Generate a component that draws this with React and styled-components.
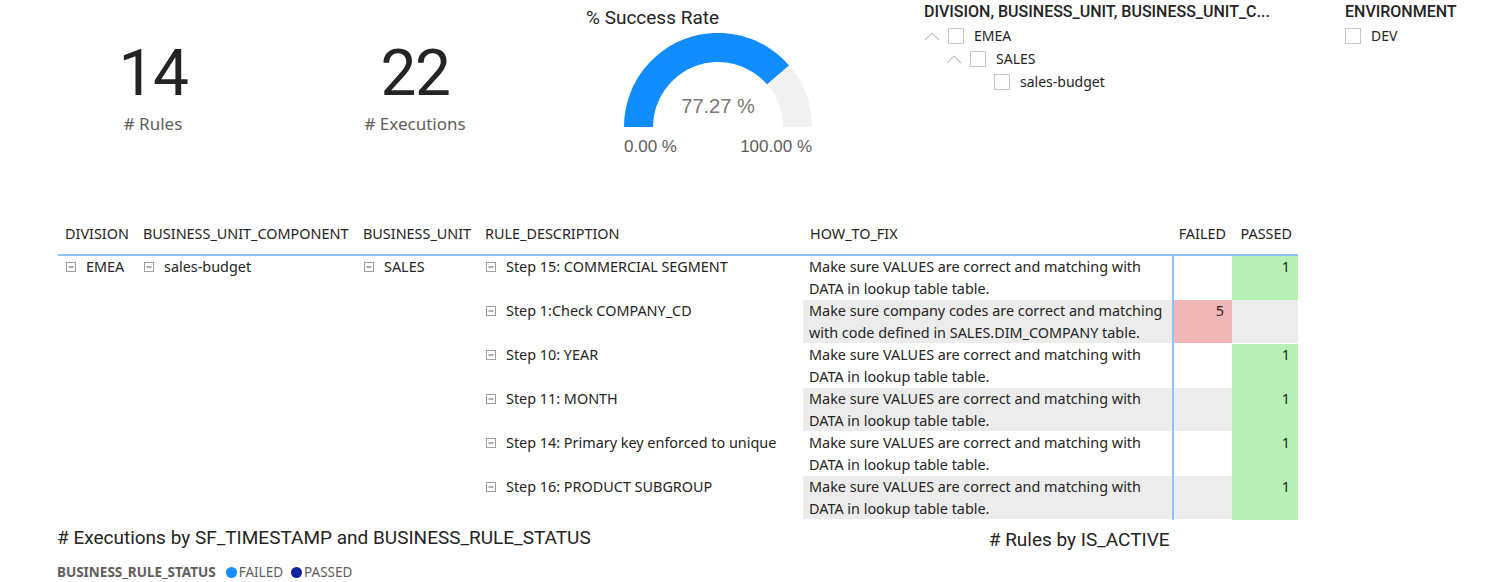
import React from 'react';
import styled, { createGlobalStyle } from 'styled-components';

const GlobalStyle = createGlobalStyle`
  body {
    margin: 0;
    background: #ffffff;
    font-family: "Noto Sans", "Open Sans", sans-serif;
    color: #252423;
  }
`;

const DIN = `"Roboto", "Liberation Sans", sans-serif`;

const rows = [
    { rule: 'Step 15: COMMERCIAL SEGMENT', fix: ['Make sure VALUES are correct and matching with', 'DATA in lookup table table.'], passed: 1 },
    { rule: 'Step 1:Check COMPANY_CD', fix: ['Make sure company codes are correct and matching', 'with code defined in SALES.DIM_COMPANY table.'], failed: 5 },
    { rule: 'Step 10: YEAR', fix: ['Make sure VALUES are correct and matching with', 'DATA in lookup table table.'], passed: 1 },
    { rule: 'Step 11: MONTH', fix: ['Make sure VALUES are correct and matching with', 'DATA in lookup table table.'], passed: 1 },
    { rule: 'Step 14: Primary key enforced to unique', fix: ['Make sure VALUES are correct and matching with', 'DATA in lookup table table.'], passed: 1 },
    { rule: 'Step 16: PRODUCT SUBGROUP', fix: ['Make sure VALUES are correct and matching with', 'DATA in lookup table table.'], passed: 1 },
];

const Chevron = () => (
    <svg width="16" height="10" viewBox="0 0 16 10">
        <polyline points="1,9 8,2 15,9" fill="none" stroke="#c8c6c4" strokeWidth="1.2" />
    </svg>
);

const Expander = () => (
    <svg width="10" height="10" viewBox="0 0 10 10">
        <rect x="0.5" y="0.5" width="9" height="9" fill="#fff" stroke="#a19f9d" />
        <line x1="2.5" y1="5" x2="7.5" y2="5" stroke="#605e5c" />
    </svg>
);

const App = () => {
    return (
        <App.Wrapper>
            <GlobalStyle />
            <TopRow>
                <Card $left={58}>
                    <BigNumber>14</BigNumber>
                    <CardLabel># Rules</CardLabel>
                </Card>
                <Card $left={72}>
                    <BigNumber>22</BigNumber>
                    <CardLabel># Executions</CardLabel>
                </Card>
                <Gauge>
                    <VisualTitle>% Success Rate</VisualTitle>
                    <GaugeBody>
                        <svg width="188" height="95" viewBox="0 0 188 95">
                            <path d="M 0 94 A 94 94 0 0 1 165.1 32.4 L 143.1 51.4 A 65 65 0 0 0 29 94 Z" fill="#118dff" />
                            <path d="M 165.1 32.4 A 94 94 0 0 1 188 94 L 159 94 A 65 65 0 0 0 143.1 51.4 Z" fill="#f1f1f1" />
                        </svg>
                        <GaugeValue>77.27 %</GaugeValue>
                        <GaugeScale>
                            <span>0.00 %</span>
                            <span>100.00 %</span>
                        </GaugeScale>
                    </GaugeBody>
                </Gauge>
                <Slicer $left={98} $width={380}>
                    <SlicerTitle>DIVISION, BUSINESS_UNIT, BUSINESS_UNIT_C...</SlicerTitle>
                    <SlicerItem $indent={0}><Chevron /><Box /><span>EMEA</span></SlicerItem>
                    <SlicerItem $indent={22}><Chevron /><Box /><span>SALES</span></SlicerItem>
                    <SlicerItem $indent={70} $leaf><Box /><span>sales-budget</span></SlicerItem>
                </Slicer>
                <Slicer $left={41} $width={130}>
                    <SlicerTitle>ENVIRONMENT</SlicerTitle>
                    <SlicerItem $indent={0} $leaf><Box /><span>DEV</span></SlicerItem>
                </Slicer>
            </TopRow>

            <Table>
                <HeadCell>DIVISION</HeadCell>
                <HeadCell>BUSINESS_UNIT_COMPONENT</HeadCell>
                <HeadCell>BUSINESS_UNIT</HeadCell>
                <HeadCell>RULE_DESCRIPTION</HeadCell>
                <HeadCell>HOW_TO_FIX</HeadCell>
                <HeadCell $right $line>FAILED</HeadCell>
                <HeadCell $right>PASSED</HeadCell>
                {rows.map((r, i) => {
                    const shade = i % 2 === 1 ? '#ececec' : '#ffffff';
                    return (
                        <React.Fragment key={i}>
                            <Cell>{i === 0 && <Tree><Expander />EMEA</Tree>}</Cell>
                            <Cell>{i === 0 && <Tree><Expander />sales-budget</Tree>}</Cell>
                            <Cell>{i === 0 && <Tree><Expander />SALES</Tree>}</Cell>
                            <Cell><Tree><Expander />{r.rule}</Tree></Cell>
                            <Cell $bg={shade}>{r.fix[0]}<br />{r.fix[1]}</Cell>
                            <Cell $bg={r.failed ? '#f0b6b8' : shade} $right $line>{r.failed}</Cell>
                            <Cell $bg={r.passed ? '#b6f0b4' : shade} $right $full={!!r.passed}>{r.passed}</Cell>
                        </React.Fragment>
                    );
                })}
            </Table>

            <BottomRow>
                <div>
                    <VisualTitle>
                        # Executions by SF_TIMESTAMP and BUSINESS_RULE_STATUS
                    </VisualTitle>
                    <Legend>
                        <strong>BUSINESS_RULE_STATUS</strong>
                        <LegendItem $color="#118dff">FAILED</LegendItem>
                        <LegendItem $color="#12239e">PASSED</LegendItem>
                    </Legend>
                </div>
                <RulesTitle># Rules by IS_ACTIVE</RulesTitle>
            </BottomRow>
        </App.Wrapper>
    );
}

App.Wrapper = styled.div`
  width: 1493px;
  height: 582px;
  overflow: hidden;
`;

const TopRow = styled.div`
  display: flex;
  height: 220px;
`;

const Card = styled.div`
  margin-left: ${p => p.$left}px;
  width: 190px;
  padding-top: 40px;
  display: flex;
  flex-direction: column;
  align-items: center;
`;

const BigNumber = styled.div`
  font-family: ${DIN};
  font-size: 64px;
  line-height: 68px;
  letter-spacing: -1.5px;
  color: #252423;
`;

const CardLabel = styled.div`
  margin-top: 4px;
  font-size: 17px;
  color: #605e5c;
`;

const Gauge = styled.div`
  margin-left: 76px;
  width: 240px;
  padding-top: 5px;
`;

const VisualTitle = styled.div`
  font-family: ${DIN};
  font-size: 19px;
  line-height: 26px;
  color: #252423;
  white-space: nowrap;
`;

const GaugeBody = styled.div`
  position: relative;
  margin: 2px 0 0 38px;
  width: 188px;
`;

const GaugeValue = styled.div`
  position: absolute;
  left: 0;
  right: 0;
  top: 62px;
  text-align: center;
  font-family: "Liberation Sans", sans-serif;
  font-size: 20px;
  color: #7a7876;
`;

const GaugeScale = styled.div`
  display: flex;
  justify-content: space-between;
  margin-top: 4px;
  font-family: "Liberation Sans", sans-serif;
  font-size: 17px;
  color: #605e5c;
`;

const Slicer = styled.div`
  margin-left: ${p => p.$left}px;
  width: ${p => p.$width}px;
  padding-top: 1px;
`;

const SlicerTitle = styled.div`
  font-family: ${DIN};
  font-size: 16px;
  line-height: 22px;
  font-weight: 500;
  color: #252423;
  white-space: nowrap;
  margin-bottom: 1px;
`;

const SlicerItem = styled.div`
  display: flex;
  align-items: center;
  height: 23px;
  padding-left: ${p => p.$indent}px;
  font-size: 14px;
  color: #252423;
  svg { margin-right: 8px; }
  span { margin-left: 10px; }
`;

const Box = styled.div`
  width: 14px;
  height: 14px;
  border: 1px solid #c8c6c4;
`;

const Table = styled.div`
  display: grid;
  grid-template-columns: 78px 220px 122px 325px 369px 60px 66px;
  grid-auto-rows: 44px;
  grid-template-rows: 36px;
  margin-left: 58px;
  width: 1240px;
  font-size: 14.4px;
`;

const HeadCell = styled.div`
  display: flex;
  align-items: flex-start;
  justify-content: ${p => (p.$right ? 'flex-end' : 'flex-start')};
  padding: 4px 6px 0 7px;
  line-height: 20px;
  border-bottom: 2px solid #8ec4f5;
  white-space: nowrap;
  color: #252423;
`;

const Cell = styled.div`
  padding: 0 8px 0 6px;
  line-height: 22px;
  text-align: ${p => (p.$right ? 'right' : 'left')};
  white-space: nowrap;
  background: linear-gradient(${p => p.$bg || '#fff'}, ${p => p.$bg || '#fff'}) top / 100% ${p => (p.$full ? '100%' : 'calc(100% - 1px)')} no-repeat;
  border-left: ${p => (p.$line ? '2px solid #8ec4f5' : 'none')};
  color: #252423;
`;

const Tree = styled.div`
  display: flex;
  align-items: center;
  gap: 10px;
  padding-left: 2px;
`;

const BottomRow = styled.div`
  display: flex;
  padding: 5px 0 0 57px;
`;

const Legend = styled.div`
  display: flex;
  align-items: center;
  gap: 8px;
  margin-top: 12px;
  font-size: 13.5px;
  color: #605e5c;
  strong { margin-right: 2px; }
`;

const LegendItem = styled.span`
  display: flex;
  align-items: center;
  &::before {
    content: '';
    width: 11px;
    height: 11px;
    border-radius: 50%;
    background: ${p => p.$color};
    margin-right: 2px;
  }
`;

const RulesTitle = styled(VisualTitle)`
  margin-left: 398px;
  padding-top: 2px;
`;

export default App;
